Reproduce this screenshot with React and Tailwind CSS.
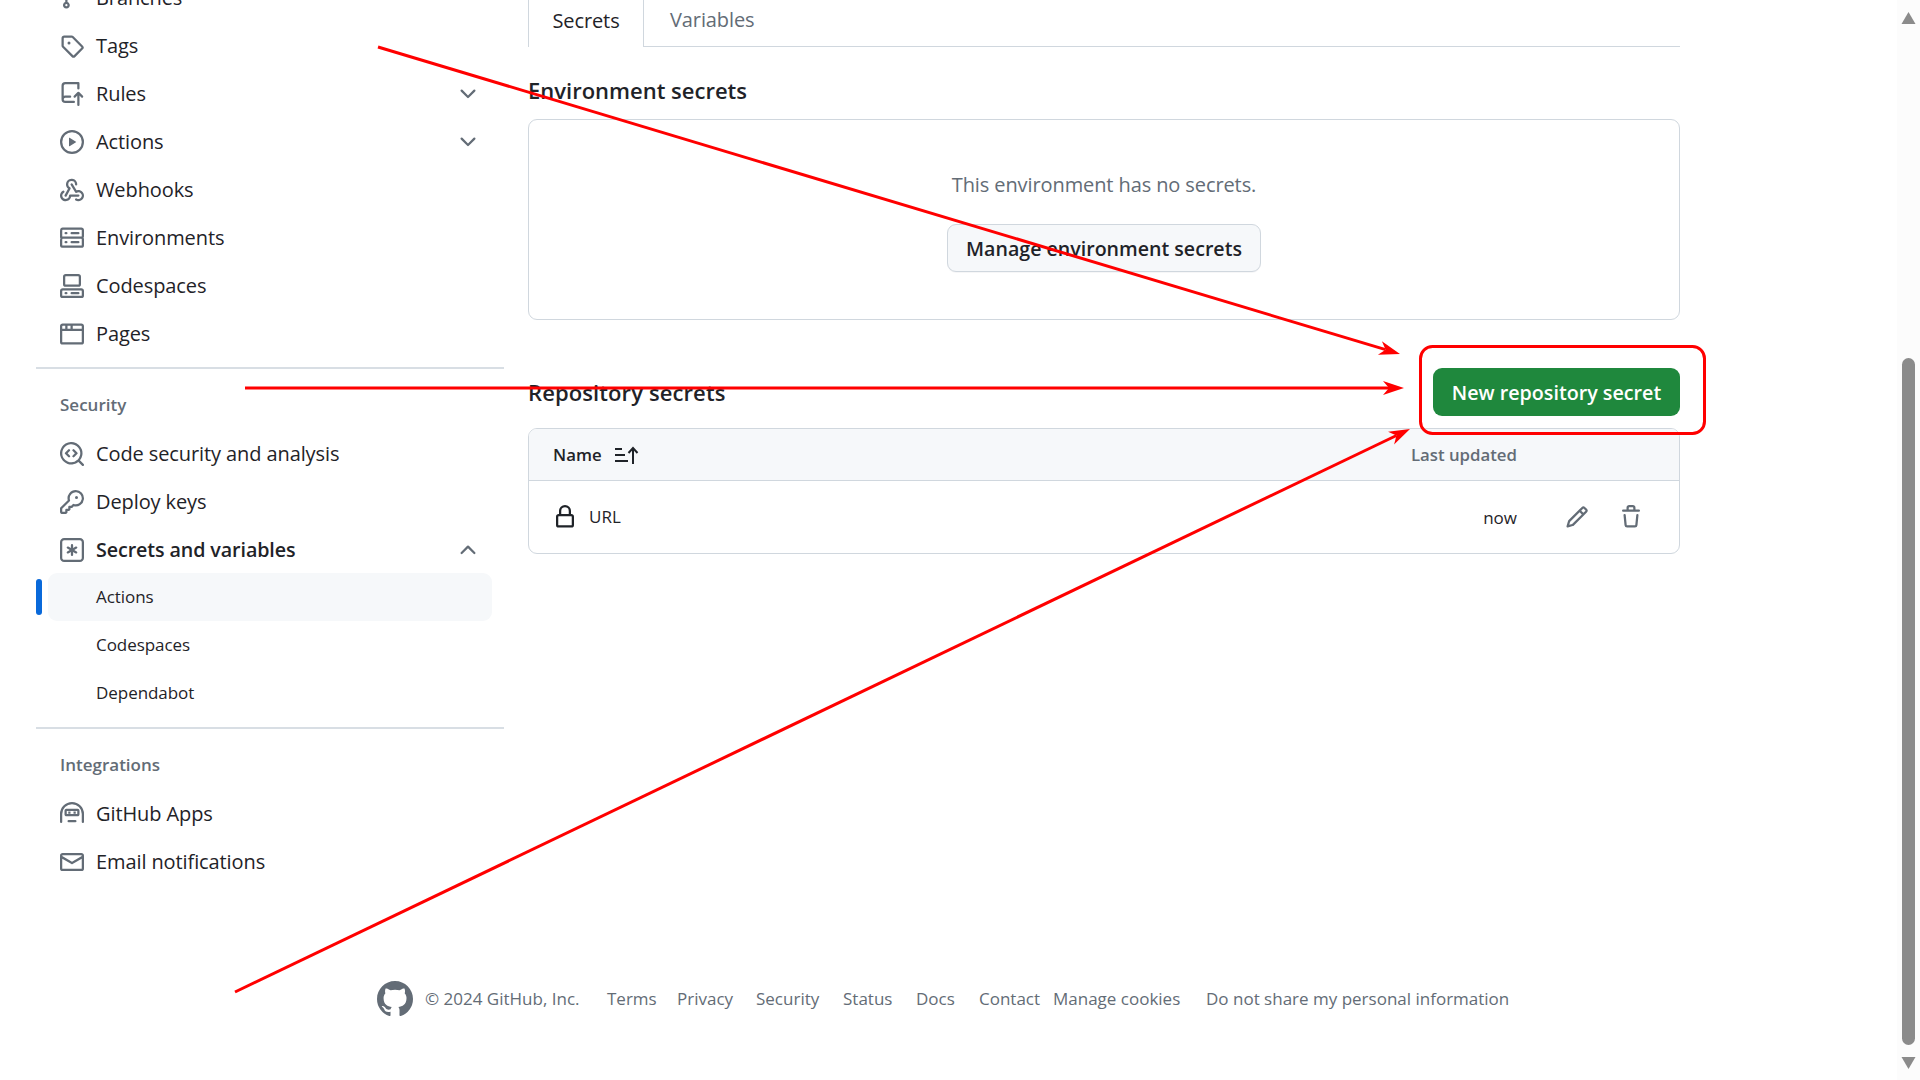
import React from 'react'

const icons = {
  branch: 'M9.5 3.25a2.25 2.25 0 1 1 3 2.122V6A2.5 2.5 0 0 1 10 8.5H6a1 1 0 0 0-1 1v1.128a2.251 2.251 0 1 1-1.5 0V5.372a2.25 2.25 0 1 1 1.5 0v1.836A2.493 2.493 0 0 1 6 7h4a1 1 0 0 0 1-1v-.628A2.25 2.25 0 0 1 9.5 3.25Zm-6 0a.75.75 0 1 0 1.5 0 .75.75 0 0 0-1.5 0Zm8.25-.75a.75.75 0 1 0 0 1.5.75.75 0 0 0 0-1.5ZM4.25 12a.75.75 0 1 0 0 1.5.75.75 0 0 0 0-1.5Z',
  tag: 'M1 7.775V2.75C1 1.784 1.784 1 2.75 1h5.025c.464 0 .91.184 1.238.513l6.25 6.25a1.75 1.75 0 0 1 0 2.474l-5.026 5.026a1.75 1.75 0 0 1-2.474 0l-6.25-6.25A1.752 1.752 0 0 1 1 7.775Zm1.5 0c0 .066.026.13.073.177l6.25 6.25a.25.25 0 0 0 .354 0l5.025-5.025a.25.25 0 0 0 0-.354l-6.25-6.25a.25.25 0 0 0-.177-.073H2.75a.25.25 0 0 0-.25.25ZM6 5a1 1 0 1 1 0 2 1 1 0 0 1 0-2Z',
  rules: 'M1 2.5A2.5 2.5 0 0 1 3.5 0h8.75a.75.75 0 0 1 .75.75v3.5a.75.75 0 0 1-1.5 0V1.5h-8a1 1 0 0 0-1 1v6.708A2.493 2.493 0 0 1 3.5 9h3.25a.75.75 0 0 1 0 1.5H3.5a1 1 0 0 0 0 2h5.75a.75.75 0 0 1 0 1.5H3.5A2.5 2.5 0 0 1 1 11.5Zm13.23 7.79h-.001l-1.224-1.224v6.184a.75.75 0 0 1-1.5 0V9.066L10.28 10.29a.75.75 0 0 1-1.06-1.061l2.505-2.504a.75.75 0 0 1 1.06 0L15.29 9.23a.751.751 0 0 1-.018 1.042.751.751 0 0 1-1.042.018Z',
  play: 'M8 0a8 8 0 1 1 0 16A8 8 0 0 1 8 0ZM1.5 8a6.5 6.5 0 1 0 13 0 6.5 6.5 0 0 0-13 0Zm4.879-2.773 4.264 2.559a.25.25 0 0 1 0 .428l-4.264 2.559A.25.25 0 0 1 6 10.559V5.442a.25.25 0 0 1 .379-.215Z',
  webhook: 'M5.5 4.25a2.25 2.25 0 0 1 4.5 0 .75.75 0 0 0 1.5 0 3.75 3.75 0 1 0-6.14 2.889l-2.272 4.258a.75.75 0 0 0 1.324.706L7 7.25a.75.75 0 0 0-.309-1.015A2.25 2.25 0 0 1 5.5 4.25Z M7.364 3.607a.75.75 0 0 1 1.03.257l2.608 4.349a3.75 3.75 0 1 1-.628 6.785.75.75 0 0 1 .752-1.299 2.25 2.25 0 1 0-.033-3.88.75.75 0 0 1-1.03-.256L7.107 4.636a.75.75 0 0 1 .257-1.03Z M2.9 8.776A.75.75 0 0 1 2.625 9.8 2.25 2.25 0 1 0 6 11.75a.75.75 0 0 1 .75-.751h5.5a.75.75 0 0 1 0 1.5H7.425a3.751 3.751 0 1 1-5.55-3.998.75.75 0 0 1 1.024.274Z',
  server: 'M1.75 1h12.5c.966 0 1.75.784 1.75 1.75v4c0 .372-.116.717-.314 1 .198.283.314.628.314 1v4a1.75 1.75 0 0 1-1.75 1.75H1.75A1.75 1.75 0 0 1 0 13.25v-4c0-.372.116-.717.314-1a1.739 1.739 0 0 1-.314-1v-4C0 1.784.784 1 1.75 1ZM1.5 2.75v4c0 .138.112.25.25.25h12.5a.25.25 0 0 0 .25-.25v-4a.25.25 0 0 0-.25-.25H1.75a.25.25 0 0 0-.25.25Zm.25 5.75a.25.25 0 0 0-.25.25v4c0 .138.112.25.25.25h12.5a.25.25 0 0 0 .25-.25v-4a.25.25 0 0 0-.25-.25ZM7 4.75A.75.75 0 0 1 7.75 4h4.5a.75.75 0 0 1 0 1.5h-4.5A.75.75 0 0 1 7 4.75ZM7.75 10h4.5a.75.75 0 0 1 0 1.5h-4.5a.75.75 0 0 1 0-1.5ZM3 4.75A.75.75 0 0 1 3.75 4h.5a.75.75 0 0 1 0 1.5h-.5A.75.75 0 0 1 3 4.75ZM3.75 10h.5a.75.75 0 0 1 0 1.5h-.5a.75.75 0 0 1 0-1.5Z',
  codespaces: 'M0 11.25c0-.966.784-1.75 1.75-1.75h12.5c.966 0 1.75.784 1.75 1.75v3A1.75 1.75 0 0 1 14.25 16H1.75A1.75 1.75 0 0 1 0 14.25Zm2-9.5C2 .784 2.784 0 3.75 0h8.5C13.216 0 14 .784 14 1.75v5a1.75 1.75 0 0 1-1.75 1.75h-8.5A1.75 1.75 0 0 1 2 6.75Zm1.75-.25a.25.25 0 0 0-.25.25v5c0 .138.112.25.25.25h8.5a.25.25 0 0 0 .25-.25v-5a.25.25 0 0 0-.25-.25Zm-2 9.5a.25.25 0 0 0-.25.25v3c0 .138.112.25.25.25h12.5a.25.25 0 0 0 .25-.25v-3a.25.25 0 0 0-.25-.25Z M7 12.75a.75.75 0 0 1 .75-.75h4.5a.75.75 0 0 1 0 1.5h-4.5a.75.75 0 0 1-.75-.75Zm-4 0a.75.75 0 0 1 .75-.75h.5a.75.75 0 0 1 0 1.5h-.5a.75.75 0 0 1-.75-.75Z',
  browser: 'M0 2.75C0 1.784.784 1 1.75 1h12.5c.966 0 1.75.784 1.75 1.75v10.5A1.75 1.75 0 0 1 14.25 15H1.75A1.75 1.75 0 0 1 0 13.25ZM14.5 6h-13v7.25c0 .138.112.25.25.25h12.5a.25.25 0 0 0 .25-.25Zm-6-3.5v2h6V2.75a.25.25 0 0 0-.25-.25ZM5 2.5v2h2v-2Zm-3.25 0a.25.25 0 0 0-.25.25V4.5h2v-2Z',
  codescan: 'M8.47 4.97a.75.75 0 0 0 0 1.06L9.94 7.5 8.47 8.97a.75.75 0 1 0 1.06 1.06l2-2a.75.75 0 0 0 0-1.06l-2-2a.75.75 0 0 0-1.06 0ZM6.53 6.03a.75.75 0 0 0-1.06-1.06l-2 2a.75.75 0 0 0 0 1.06l2 2a.75.75 0 1 0 1.06-1.06L5.06 7.5l1.47-1.47Z M12.246 13.307a7.501 7.501 0 1 1 1.06-1.06l2.474 2.473a.749.749 0 0 1-.326 1.275.749.749 0 0 1-.734-.215ZM1.5 7.5a6.002 6.002 0 0 0 3.608 5.504 6.002 6.002 0 0 0 6.486-1.117.748.748 0 0 1 .292-.293A6 6 0 1 0 1.5 7.5Z',
  key: 'M10.5 0a5.499 5.499 0 1 1-1.288 10.848l-.932.932a.749.749 0 0 1-.53.22H7v.75a.749.749 0 0 1-.22.53l-.5.5a.749.749 0 0 1-.53.22H5v.75a.749.749 0 0 1-.22.53l-.5.5a.749.749 0 0 1-.53.22h-2A1.75 1.75 0 0 1 0 14.25v-2c0-.199.079-.389.22-.53l4.932-4.932A5.5 5.5 0 0 1 10.5 0Zm-4 5.5c-.001.431.069.86.205 1.269a.75.75 0 0 1-.181.768L1.5 12.56v1.69c0 .138.112.25.25.25h1.69l.06-.06v-1.19a.75.75 0 0 1 .75-.75h1.19l.06-.06v-1.19a.75.75 0 0 1 .75-.75h1.19l1.023-1.025a.75.75 0 0 1 .768-.18A4 4 0 1 0 6.5 5.5ZM11 6a1 1 0 1 1 0-2 1 1 0 0 1 0 2Z',
  asterisk: 'M0 2.75A2.75 2.75 0 0 1 2.75 0h10.5A2.75 2.75 0 0 1 16 2.75v10.5A2.75 2.75 0 0 1 13.25 16H2.75A2.75 2.75 0 0 1 0 13.25ZM2.75 1.5c-.69 0-1.25.56-1.25 1.25v10.5c0 .69.56 1.25 1.25 1.25h10.5c.69 0 1.25-.56 1.25-1.25V2.75c0-.69-.56-1.25-1.25-1.25Z M8 4a.75.75 0 0 1 .75.75V6.7l1.69-.975a.75.75 0 0 1 .75 1.3L9.5 8l1.69.976a.75.75 0 0 1-.75 1.298L8.75 9.3v1.951a.75.75 0 0 1-1.5 0V9.299l-1.69.976a.75.75 0 0 1-.75-1.3L6.5 8l-1.69-.975a.75.75 0 0 1 .75-1.3l1.69.976V4.75A.75.75 0 0 1 8 4Z',
  hubot: 'M0 8a8 8 0 0 1 16 0v5.25a.75.75 0 0 1-1.5 0V8a6.5 6.5 0 1 0-13 0v5.25a.75.75 0 0 1-1.5 0Z M4.25 4.5h7.5c.69 0 1.25.56 1.25 1.25v2.5c0 .69-.56 1.25-1.25 1.25h-7.5C3.56 9.5 3 8.94 3 8.25v-2.5C3 5.06 3.56 4.5 4.25 4.5Zm.25 1.5v2h7V6Z M5.5 6.25h1.5v1.5H5.5Z M9 6.25h1.5v1.5H9Z M5.75 12h4.5a.75.75 0 0 1 0 1.5h-4.5a.75.75 0 0 1 0-1.5Z',
  mail: 'M1.75 2h12.5c.966 0 1.75.784 1.75 1.75v8.5A1.75 1.75 0 0 1 14.25 14H1.75A1.75 1.75 0 0 1 0 12.25v-8.5C0 2.784.784 2 1.75 2ZM1.5 12.251c0 .138.112.25.25.25h12.5a.25.25 0 0 0 .25-.25V5.809L8.38 9.397a.75.75 0 0 1-.76 0L1.5 5.809v6.442Zm13-8.181v-.32a.25.25 0 0 0-.25-.25H1.75a.25.25 0 0 0-.25.25v.32L8 7.88Z',
  down: 'M12.78 5.22a.749.749 0 0 1 0 1.06l-4.25 4.25a.749.749 0 0 1-1.06 0L3.22 6.28a.749.749 0 1 1 1.06-1.06L8 8.939l3.72-3.719a.749.749 0 0 1 1.06 0Z',
  up: 'M3.22 10.53a.749.749 0 0 1 0-1.06l4.25-4.25a.749.749 0 0 1 1.06 0l4.25 4.25a.749.749 0 1 1-1.06 1.06L8 6.811 4.28 10.53a.749.749 0 0 1-1.06 0Z',
  lock: 'M4 4a4 4 0 0 1 8 0v2h.25c.966 0 1.75.784 1.75 1.75v5.5A1.75 1.75 0 0 1 12.25 15h-8.5A1.75 1.75 0 0 1 2 13.25v-5.5C2 6.784 2.784 6 3.75 6H4Zm8.25 3.5h-8.5a.25.25 0 0 0-.25.25v5.5c0 .138.112.25.25.25h8.5a.25.25 0 0 0 .25-.25v-5.5a.25.25 0 0 0-.25-.25ZM10.5 6V4a2.5 2.5 0 1 0-5 0v2Z',
  pencil: 'M11.013 1.427a1.75 1.75 0 0 1 2.474 0l1.086 1.086a1.75 1.75 0 0 1 0 2.474l-8.61 8.61c-.21.21-.47.364-.756.445l-3.251.93a.75.75 0 0 1-.927-.928l.929-3.25c.081-.286.235-.547.445-.758l8.61-8.61Zm.176 4.823L9.75 4.81l-6.286 6.287a.253.253 0 0 0-.064.108l-.558 1.953 1.953-.558a.253.253 0 0 0 .108-.064Zm1.238-3.763a.25.25 0 0 0-.354 0L10.811 3.75l1.439 1.44 1.263-1.263a.25.25 0 0 0 0-.354Z',
  trash: 'M11 1.75V3h2.25a.75.75 0 0 1 0 1.5H2.75a.75.75 0 0 1 0-1.5H5V1.75C5 .784 5.784 0 6.75 0h2.5C10.216 0 11 .784 11 1.75ZM4.496 6.675l.66 6.6a.25.25 0 0 0 .249.225h5.19a.25.25 0 0 0 .249-.225l.66-6.6a.75.75 0 0 1 1.492.149l-.66 6.6A1.748 1.748 0 0 1 10.595 15h-5.19a1.75 1.75 0 0 1-1.741-1.575l-.66-6.6a.75.75 0 1 1 1.492-.15ZM6.5 1.75V3h3V1.75a.25.25 0 0 0-.25-.25h-2.5a.25.25 0 0 0-.25.25Z',
  github: 'M8 0c4.42 0 8 3.58 8 8a8.013 8.013 0 0 1-5.45 7.59c-.4.08-.55-.17-.55-.38 0-.27.01-1.13.01-2.2 0-.75-.25-1.23-.54-1.48 1.78-.2 3.65-.88 3.65-3.95 0-.88-.31-1.59-.82-2.15.08-.2.36-1.02-.08-2.12 0 0-.67-.22-2.2.82-.64-.18-1.32-.27-2-.27-.68 0-1.36.09-2 .27-1.53-1.03-2.2-.82-2.2-.82-.44 1.1-.16 1.92-.08 2.12-.51.56-.82 1.28-.82 2.15 0 3.06 1.86 3.75 3.64 3.95-.23.2-.44.55-.51 1.07-.46.21-1.61.55-2.33-.66-.15-.24-.6-.83-1.23-.82-.67.01-.27.38.01.53.34.19.73.9.82 1.13.16.45.68 1.31 2.69.94 0 .67.01 1.3.01 1.49 0 .21-.15.45-.55.38A7.995 7.995 0 0 1 0 8c0-4.42 3.58-8 8-8Z',
}

function Icon({ name, className = 'w-6 h-6 text-[#636c76]' }) {
  return (
    <svg viewBox="0 0 16 16" fill="currentColor" fillRule="evenodd" className={`shrink-0 ${className}`}>
      <path d={icons[name]} />
    </svg>
  )
}

function NavItem({ icon, label, chevron, bold }) {
  return (
    <div className="flex items-center h-12 ml-3 mr-3 pl-3 pr-3 gap-3">
      <Icon name={icon} />
      <span className={`tracking-[-0.1px] text-[#1f2328] ${bold ? 'text-[19.7px] font-semibold' : 'text-[20px]'}`}>{label}</span>
      {chevron && <Icon name={chevron} className="w-6 h-6 ml-auto text-[#636c76]" />}
    </div>
  )
}

function SubItem({ label, active }) {
  return (
    <div className="flex items-center h-12 relative">
      {active && <div className="absolute left-0 top-[6px] w-[6px] h-9 rounded-[3px] bg-[#0969da]" />}
      <div className={`flex-1 flex items-center h-12 pb-px ml-3 mr-3 pl-12 rounded-[9px] text-[17px] tracking-[-0.05px] text-[#1f2328] ${active ? 'bg-[#f6f8fa]' : ''}`}>
        {label}
      </div>
    </div>
  )
}

function SectionLabel({ children }) {
  return <div className="pl-6 pt-[24px] h-[61px] leading-[24px] text-[17px] font-semibold text-[#636c76]">{children}</div>
}

function Sidebar() {
  return (
    <nav className="w-[468px] ml-9 -mt-[26px] shrink-0">
      <NavItem icon="branch" label="Branches" />
      <NavItem icon="tag" label="Tags" />
      <NavItem icon="rules" label="Rules" chevron="down" />
      <NavItem icon="play" label="Actions" chevron="down" />
      <NavItem icon="webhook" label="Webhooks" />
      <NavItem icon="server" label="Environments" />
      <NavItem icon="codespaces" label="Codespaces" />
      <NavItem icon="browser" label="Pages" />
      <div className="h-[2px] mt-[9px] bg-[#d8dee4]" />
      <SectionLabel>Security</SectionLabel>
      <NavItem icon="codescan" label="Code security and analysis" />
      <NavItem icon="key" label="Deploy keys" />
      <div className="-mb-px">
        <NavItem icon="asterisk" label="Secrets and variables" chevron="up" bold />
      </div>
      <SubItem label="Actions" active />
      <SubItem label="Codespaces" />
      <SubItem label="Dependabot" />
      <div className="h-[2px] mt-[10px] bg-[#d8dee4]" />
      <SectionLabel>Integrations</SectionLabel>
      <NavItem icon="hubot" label="GitHub Apps" />
      <NavItem icon="mail" label="Email notifications" />
    </nav>
  )
}

function Tabs() {
  return (
    <div className="flex h-[48px] border-b border-[#d0d7de] text-[20px] tracking-[-0.1px]">
      <div className="w-[116px] h-[48px] pb-[5px] flex items-center justify-center border-x border-[#d0d7de] bg-white text-[#1f2328]">Secrets</div>
      <div className="pl-[26px] pb-[5px] flex items-center text-[#636c76]">Variables</div>
    </div>
  )
}

function EnvironmentSecrets() {
  return (
    <section>
      <h2 className="mt-[27px] h-[33px] leading-[33px] text-[22px] font-semibold text-[#1f2328]">Environment secrets</h2>
      <div className="mt-[12px] h-[201px] rounded-[9px] border border-[#d0d7de] flex flex-col items-center pt-[49px]">
        <p className="h-[32px] leading-[32px] text-[20px] tracking-[-0.1px] text-[#636c76]">This environment has no secrets.</p>
        <button className="mt-[23px] h-12 w-[314px] pt-[1px] rounded-[9px] border border-[#d0d7de] bg-[#f6f8fa] text-[19.6px] font-semibold text-[#1f2328] shadow-[0_1px_0_rgba(31,35,40,0.04)]">
          Manage environment secrets
        </button>
      </div>
    </section>
  )
}

function RepositorySecrets() {
  return (
    <section>
      <div className="mt-[48px] flex items-center justify-between">
        <h2 className="text-[22px] tracking-[0.1px] font-semibold text-[#1f2328]">Repository secrets</h2>
        <button className="h-12 w-[247px] pt-[2px] rounded-[9px] bg-[#1f883d] text-[19.7px] font-semibold text-white">New repository secret</button>
      </div>
      <div className="mt-[12px] rounded-[9px] border border-[#d0d7de] overflow-hidden">
        <div className="h-[52px] flex items-center justify-between bg-[#f6f8fa] border-b border-[#d0d7de] pl-6 pr-[162px] text-[16.8px] font-semibold">
          <div className="flex items-center gap-[13px] text-[#1f2328]">
            Name
            <svg viewBox="0 0 24 24" className="w-6 h-6" fill="none" stroke="#1f2328" strokeWidth="2">
              <path d="M0 6h7M0 12h10M0 18h13" />
              <path d="M18 21V5M13.5 10l4.5-5 4.5 5" />
            </svg>
          </div>
          <span className="text-[#636c76]">Last updated</span>
        </div>
        <div className="h-[72px] flex items-center pl-6 pr-[36px] text-[17px] text-[#1f2328]">
          <Icon name="lock" className="w-6 h-6 text-[#1f2328]" />
          <span className="ml-3 font-medium">URL</span>
          <span className="ml-auto pt-[2px]">now</span>
          <Icon name="pencil" className="w-6 h-6 ml-[48px] text-[#636c76]" />
          <Icon name="trash" className="w-6 h-6 ml-[30px] text-[#636c76]" />
        </div>
      </div>
    </section>
  )
}

function Footer() {
  return (
    <footer className="mt-[95px] pl-[377px] flex items-center text-[17px] text-[#636c76]">
      <Icon name="github" className="w-9 h-9 text-[#636c76]" />
      <div className="flex items-center">
        <span className="ml-3 w-[158px]">© 2024 GitHub, Inc.</span>
        <a className="ml-6 w-[46px]">Terms</a>
        <a className="ml-6 w-[55px]">Privacy</a>
        <a className="ml-6 w-[63px]">Security</a>
        <a className="ml-6 w-[49px]">Status</a>
        <a className="ml-6 w-[39px]">Docs</a>
        <a className="ml-6 w-[62px]">Contact</a>
        <a className="ml-3 w-[129px]">Manage cookies</a>
        <a className="ml-6">Do not share my personal information</a>
      </div>
    </footer>
  )
}

function Scrollbar() {
  return (
    <div className="w-[23px] shrink-0 h-screen bg-[#fcfcfc] flex flex-col items-center">
      <svg viewBox="0 0 14 12" className="w-[15px] h-[12px] mt-3 fill-[#8b8b8b]"><path d="M7 0l7 12H0Z" /></svg>
      <div className="w-[13px] h-[687px] mt-[334px] rounded-full bg-[#8b8b8b]" />
      <svg viewBox="0 0 14 12" className="w-[15px] h-[12px] mt-3 fill-[#8b8b8b]"><path d="M0 0h14L7 12Z" /></svg>
    </div>
  )
}

function Arrow({ from, to }) {
  const dx = to[0] - from[0]
  const dy = to[1] - from[1]
  const len = Math.hypot(dx, dy)
  const ux = dx / len
  const uy = dy / len
  const head = [
    to,
    [to[0] - 21 * ux + 7 * uy, to[1] - 21 * uy - 7 * ux],
    [to[0] - 15 * ux, to[1] - 15 * uy],
    [to[0] - 21 * ux - 7 * uy, to[1] - 21 * uy + 7 * ux],
  ]
  return (
    <g>
      <line x1={from[0]} y1={from[1]} x2={to[0] - 15 * ux} y2={to[1] - 15 * uy} stroke="#ff0000" strokeWidth="3" />
      <polygon points={head.map((p) => p.join(',')).join(' ')} fill="#ff0000" />
    </g>
  )
}

function Annotations() {
  return (
    <svg viewBox="0 0 1920 1080" className="absolute inset-0 w-[1920px] h-[1080px] pointer-events-none">
      <Arrow from={[378, 47]} to={[1400, 354]} />
      <Arrow from={[245, 388]} to={[1404, 388]} />
      <Arrow from={[235, 992]} to={[1410, 429]} />
      <rect x="1420.5" y="346.5" width="284" height="87" rx="12" fill="none" stroke="#ff0000" strokeWidth="3" />
    </svg>
  )
}

export default function App() {
  return (
    <div className="relative flex w-full h-screen overflow-hidden bg-white font-['Open_Sans',sans-serif]">
      <div className="flex-1 min-w-0">
        <div className="flex">
          <Sidebar />
          <main className="w-[1152px] ml-6 -mt-[1px]">
            <Tabs />
            <EnvironmentSecrets />
            <RepositorySecrets />
          </main>
        </div>
        <Footer />
      </div>
      <Scrollbar />
      <Annotations />
    </div>
  )
}
